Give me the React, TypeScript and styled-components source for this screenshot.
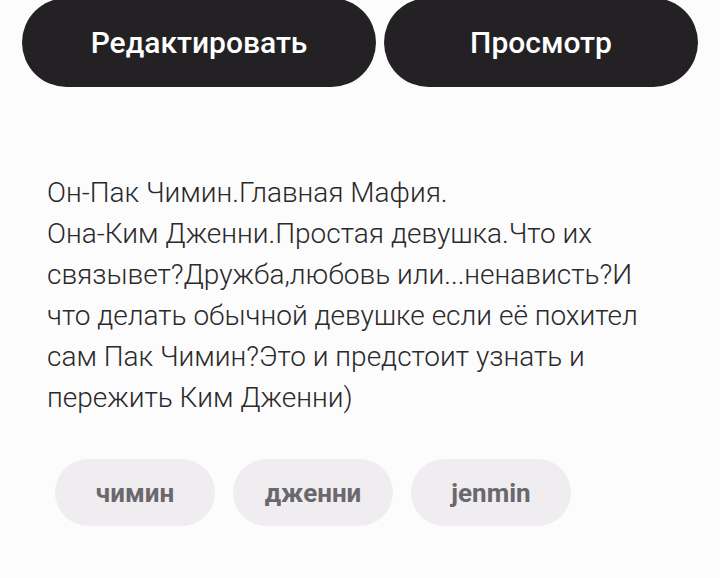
import styled, { createGlobalStyle } from "styled-components";

const GlobalStyle = createGlobalStyle`
  html, body {
    margin: 0;
    padding: 0;
    background: #fdfcfd;
  }
  body {
    font-family: Roboto, "Noto Sans", sans-serif;
  }
`;

const Page = styled.div`
  width: 720px;
  height: 578px;
  overflow: hidden;
  display: flex;
  flex-direction: column;
`;

const ActionBar = styled.div`
  display: grid;
  grid-template-columns: 354fr 314fr;
  gap: 8px;
  padding: 0 22px;
  margin-top: -2px;
`;

const ActionButton = styled.button`
  height: 89px;
  border: none;
  border-radius: 45px;
  background: #232124;
  color: #fff;
  font-family: Roboto, sans-serif;
  font-weight: 500;
  font-size: 30px;
  padding: 0;
  cursor: pointer;
`;

const Description = styled.p`
  margin: 85px 0 0;
  padding: 0 30px 0 47px;
  font-family: Roboto, sans-serif;
  font-weight: 300;
  font-size: 28px;
  line-height: 41px;
  color: #2a292b;
`;

const TagList = styled.div`
  display: flex;
  gap: 18px;
  padding: 0 55px;
  margin-top: 41px;
`;

const Tag = styled.span`
  width: 160px;
  height: 67px;
  border-radius: 34px;
  background: #efedf0;
  color: #6a686c;
  font-family: Roboto, sans-serif;
  font-weight: 700;
  font-size: 26px;
  display: flex;
  align-items: center;
  justify-content: center;
`;

const lines = [
  "Он-Пак Чимин.Главная Мафия.",
  "Она-Ким Дженни.Простая девушка.Что их",
  "связывет?Дружба,любовь или...ненависть?И",
  "что делать обычной девушке если её похител",
  "сам Пак Чимин?Это и предстоит узнать и",
  "пережить Ким Дженни)",
];

const tags = ["чимин", "дженни", "jenmin"];

export default function App() {
  return (
    <Page>
      <GlobalStyle />
      <ActionBar>
        <ActionButton>Редактировать</ActionButton>
        <ActionButton>Просмотр</ActionButton>
      </ActionBar>
      <Description>
        {lines.map((line, i) => (
          <span key={i}>
            {line}
            {i < lines.length - 1 && <br />}
          </span>
        ))}
      </Description>
      <TagList>
        {tags.map((t) => (
          <Tag key={t}>{t}</Tag>
        ))}
      </TagList>
    </Page>
  );
}
